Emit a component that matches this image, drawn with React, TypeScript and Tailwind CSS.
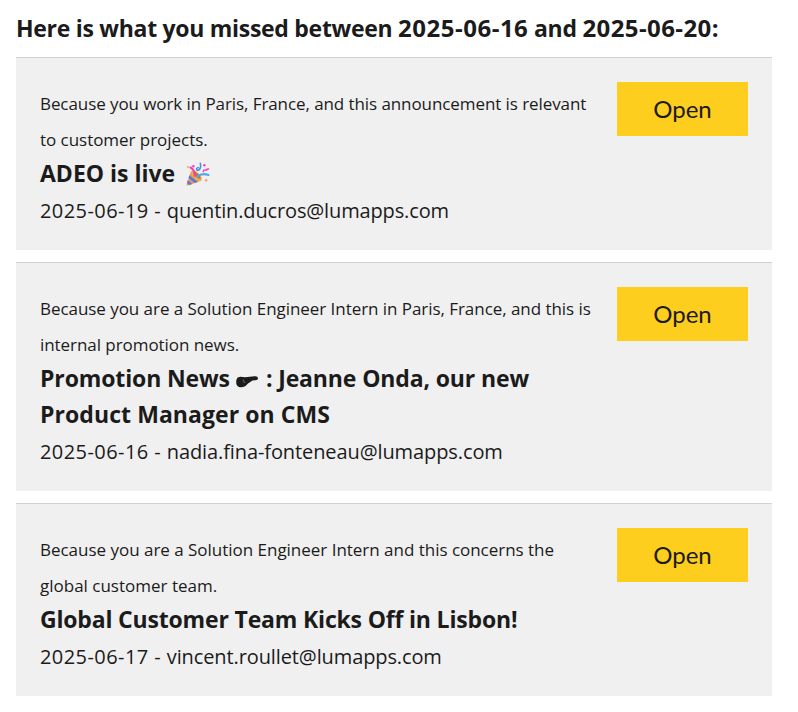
import type { ReactNode } from "react";

type Line = { content: ReactNode; className: string };
type Item = { reason: Line[]; title: Line[]; date: string; author: Line };

function PartyPopper() {
  return (
    <svg className="ml-[11px] inline-block h-6 w-6 align-[-4px]" viewBox="0 0 24 24" fill="none">
      <path d="M5 9.2C8.4 9.8 14.6 15.5 15 18.8L2 23.4Q.4 23.8.7 22Z" fill="#e99b55" />
      <path d="M3.4 13.2 11.8 20l-3 1.1-6.3-5.2ZM1.7 18.2l4.6 3.8-2.7 1-2.5-2.1Z" fill="#5b78d8" />
      <ellipse cx="10.5" cy="13.7" rx="6.8" ry="3.2" transform="rotate(44 10.5 13.7)" fill="#f0ae4b" />
      <ellipse cx="10.9" cy="13.2" rx="4.8" ry="1.7" transform="rotate(44 10.9 13.2)" fill="#b9783d" />
      <path d="M8.6 13.8C9.2 9.6 7.2 7.2 4.5 5.4" stroke="#f542a5" strokeWidth="2.1" strokeLinecap="round" />
      <path d="M11.2 14.6C14.3 11.9 18.3 11.5 22.6 13" stroke="#48a9ec" strokeWidth="2.1" strokeLinecap="round" />
      <path d="M14.3 1.2C14.9 4 14.4 7 12.7 8.2 9.6 8.8 10.1 5.3 12.3 5.7" stroke="#3c91df" strokeWidth="1.5" strokeLinecap="round" />
      <path d="M17.2 9.5C18 6.6 19.5 9 20.7 7.8Q21.2 6.8 22.6 6.9" stroke="#f542a5" strokeWidth="1.5" strokeLinecap="round" />
      <circle cx="7.4" cy="4.2" r="1.2" fill="#f542a5" />
      <circle cx="18.4" cy="3.2" r="1.2" fill="#f542a5" />
      <path d="m1.9 3.8 1.2 1.2-1.2 1.2L.7 5ZM20.2 16.5l1.7 1.7-1.7 1.7-1.7-1.7Z" fill="#edac65" />
    </svg>
  );
}

function PointingHand() {
  return (
    <svg className="ml-[6px] mr-[8px] inline-block h-3 w-[22px] align-[-1px]" viewBox="0 0 22 12">
      <path d="M4.5.8 9 1.3 18.5.3Q22 0 22 2.2T19 4.2L16.5 4.6 12 7.5 9.5 10Q6 11.7 3 11Q.2 9.8.2 6.5T1.6 1.5Z" fill="#1b1b1b" />
      <path d="M7.3 3.5v2.8M8.7 5.4v1.7" stroke="#777" strokeWidth=".8" />
    </svg>
  );
}

const items: Item[] = [
  {
    reason: [
      { content: "Because you work in Paris, France, and this announcement is relevant", className: "tracking-[-0.08px]" },
      { content: "to customer projects.", className: "tracking-[-0.04px]" },
    ],
    title: [{ content: <>ADEO is live<PartyPopper /></>, className: "tracking-normal" }],
    date: "2025-06-19",
    author: { content: "quentin.ducros@lumapps.com", className: "tracking-[-0.14px]" },
  },
  {
    reason: [
      { content: "Because you are a Solution Engineer Intern in Paris, France, and this is", className: "tracking-[-0.05px]" },
      { content: "internal promotion news.", className: "tracking-[-0.06px]" },
    ],
    title: [
      { content: <>Promotion News<PointingHand />: Jeanne Onda, our new</>, className: "tracking-[-0.13px]" },
      { content: "Product Manager on CMS", className: "tracking-[0.07px]" },
    ],
    date: "2025-06-16",
    author: { content: "nadia.fina-fonteneau@lumapps.com", className: "tracking-[-0.1px]" },
  },
  {
    reason: [
      { content: "Because you are a Solution Engineer Intern and this concerns the", className: "tracking-[-0.02px]" },
      { content: "global customer team.", className: "tracking-normal" },
    ],
    title: [{ content: "Global Customer Team Kicks Off in Lisbon!", className: "tracking-[-0.18px]" }],
    date: "2025-06-17",
    author: { content: "vincent.roullet@lumapps.com", className: "tracking-[-0.11px]" },
  },
];

function Card({ item }: { item: Item }) {
  return (
    <section className="flex items-start justify-between border-t border-[#d0d1d1] bg-[#f0f0f0] px-6 pb-[23px] pt-[25px]">
      <div className="whitespace-nowrap text-2xl leading-9">
        {item.reason.map((line, i) => (
          <p key={i} className="h-9"><span className={`text-[17px] leading-9 ${line.className}`}>{line.content}</span></p>
        ))}
        <h2 className="font-bold">
          {item.title.map((line, i) => (
            <span key={i} className="block h-9"><span className={`text-[23px] leading-9 ${line.className}`}>{line.content}</span></span>
          ))}
        </h2>
        <p className="h-9">
          <span className="text-[20px] leading-9 tracking-[0.43px]">{item.date} - </span>
          <span className={`text-[20px] leading-9 ${item.author.className}`}>{item.author.content}</span>
        </p>
      </div>
      <button className="-mt-px h-[54px] w-[131px] shrink-0 bg-[#fdce1e] font-['Lato',sans-serif] text-2xl leading-9 text-[#1b1b1b]">Open</button>
    </section>
  );
}

export default function App() {
  return (
    <main className="min-h-screen bg-white pl-4 pr-[26px] pt-[10px] font-['Open_Sans',sans-serif] text-[#1b1b1b]">
      <h1 className="mb-[11px] h-9 whitespace-nowrap text-[23px] font-bold leading-9 tracking-[-0.29px]">
        Here is what you missed between <span className="text-2xl leading-9 tracking-[0.5px]">2025-06-16</span> and{" "}
        <span className="text-2xl leading-9 tracking-[0.4px]">2025-06-20:</span>
      </h1>
      <div className="flex flex-col gap-3">
        {items.map((item, i) => <Card key={i} item={item} />)}
      </div>
    </main>
  );
}
